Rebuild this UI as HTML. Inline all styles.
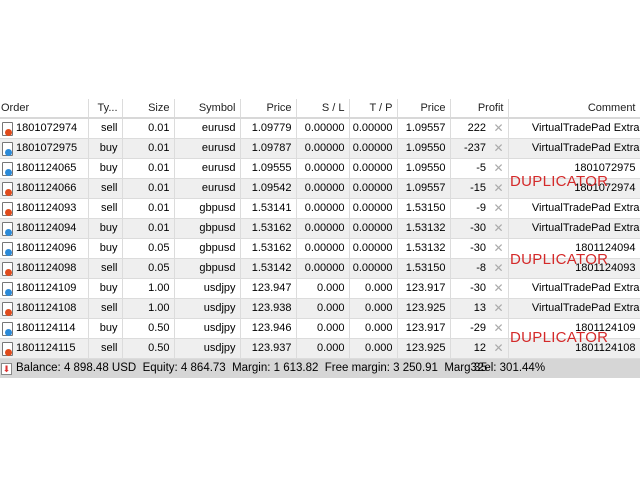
<!DOCTYPE html>
<html><head><meta charset="utf-8"><style>
body{margin:0;width:640px;height:480px;background:#fff;font-family:"Liberation Sans",sans-serif;font-size:11px;color:#000;position:relative;overflow:hidden}
table{position:absolute;left:0;top:99px;border-collapse:collapse;table-layout:fixed;width:640px}
td,th{height:19px;line-height:19px;padding:0 4px 0 0;border-right:1px solid #dcdcdc;border-bottom:1px solid #dcdcdc;text-align:right;white-space:nowrap;overflow:hidden;font-weight:normal}
th{border-bottom:2px solid #d8d8d8;height:18px;line-height:18px;color:#222}
tr.g td{background:#efefef}
td.o{text-align:left;padding-left:16px;position:relative}
th.o{text-align:left;padding-left:1px}
td.c{overflow:visible;padding-right:0}
.ic{position:absolute;left:2px;top:3px;width:9px;height:12px;border:1px solid #777;border-radius:1px;background:#fff}
.ic i{position:absolute;left:2px;top:6px;width:7px;height:7px;border-radius:50%}
.s i{background:#e04a1a}.b i{background:#2a8ad8}
.x{color:#aaa;font-size:12px}
.dup{position:absolute;left:510px;color:#d42a2a;font-size:15px;letter-spacing:0.3px}
.st{position:absolute;left:0;top:359px;width:640px;height:19px;background:#d6d6d6;font-size:11.5px;line-height:19px}
.st b{font-weight:normal;padding-left:16px}
.si{position:absolute;left:1px;top:4px;width:9px;height:10px;border:1px solid #888;background:#fff;color:#d33;font-size:9px;line-height:10px;text-align:center}
</style></head><body>
<table>
<colgroup><col style="width:88px"><col style="width:34px"><col style="width:52px"><col style="width:66px"><col style="width:56px"><col style="width:53px"><col style="width:48px"><col style="width:53px"><col style="width:40px"><col style="width:18px"><col style="width:132px"></colgroup>
<tr><th class="o">Order</th><th>Ty...</th><th>Size</th><th>Symbol</th><th>Price</th><th>S / L</th><th>T / P</th><th>Price</th><th colspan="2">Profit</th><th>Comment</th></tr>
<tr><td class="o"><span class="ic s"><i></i></span>1801072974</td><td>sell</td><td>0.01</td><td>eurusd</td><td>1.09779</td><td>0.00000</td><td>0.00000</td><td>1.09557</td><td style="border-right:none">222</td><td class="x">✕</td><td class="c">VirtualTradePad Extra</td></tr>
<tr class="g"><td class="o"><span class="ic b"><i></i></span>1801072975</td><td>buy</td><td>0.01</td><td>eurusd</td><td>1.09787</td><td>0.00000</td><td>0.00000</td><td>1.09550</td><td style="border-right:none">-237</td><td class="x">✕</td><td class="c">VirtualTradePad Extra</td></tr>
<tr><td class="o"><span class="ic b"><i></i></span>1801124065</td><td>buy</td><td>0.01</td><td>eurusd</td><td>1.09555</td><td>0.00000</td><td>0.00000</td><td>1.09550</td><td style="border-right:none">-5</td><td class="x">✕</td><td>1801072975</td></tr>
<tr class="g"><td class="o"><span class="ic s"><i></i></span>1801124066</td><td>sell</td><td>0.01</td><td>eurusd</td><td>1.09542</td><td>0.00000</td><td>0.00000</td><td>1.09557</td><td style="border-right:none">-15</td><td class="x">✕</td><td>1801072974</td></tr>
<tr><td class="o"><span class="ic s"><i></i></span>1801124093</td><td>sell</td><td>0.01</td><td>gbpusd</td><td>1.53141</td><td>0.00000</td><td>0.00000</td><td>1.53150</td><td style="border-right:none">-9</td><td class="x">✕</td><td class="c">VirtualTradePad Extra</td></tr>
<tr class="g"><td class="o"><span class="ic b"><i></i></span>1801124094</td><td>buy</td><td>0.01</td><td>gbpusd</td><td>1.53162</td><td>0.00000</td><td>0.00000</td><td>1.53132</td><td style="border-right:none">-30</td><td class="x">✕</td><td class="c">VirtualTradePad Extra</td></tr>
<tr><td class="o"><span class="ic b"><i></i></span>1801124096</td><td>buy</td><td>0.05</td><td>gbpusd</td><td>1.53162</td><td>0.00000</td><td>0.00000</td><td>1.53132</td><td style="border-right:none">-30</td><td class="x">✕</td><td>1801124094</td></tr>
<tr class="g"><td class="o"><span class="ic s"><i></i></span>1801124098</td><td>sell</td><td>0.05</td><td>gbpusd</td><td>1.53142</td><td>0.00000</td><td>0.00000</td><td>1.53150</td><td style="border-right:none">-8</td><td class="x">✕</td><td>1801124093</td></tr>
<tr><td class="o"><span class="ic b"><i></i></span>1801124109</td><td>buy</td><td>1.00</td><td>usdjpy</td><td>123.947</td><td>0.000</td><td>0.000</td><td>123.917</td><td style="border-right:none">-30</td><td class="x">✕</td><td class="c">VirtualTradePad Extra</td></tr>
<tr class="g"><td class="o"><span class="ic s"><i></i></span>1801124108</td><td>sell</td><td>1.00</td><td>usdjpy</td><td>123.938</td><td>0.000</td><td>0.000</td><td>123.925</td><td style="border-right:none">13</td><td class="x">✕</td><td class="c">VirtualTradePad Extra</td></tr>
<tr><td class="o"><span class="ic b"><i></i></span>1801124114</td><td>buy</td><td>0.50</td><td>usdjpy</td><td>123.946</td><td>0.000</td><td>0.000</td><td>123.917</td><td style="border-right:none">-29</td><td class="x">✕</td><td>1801124109</td></tr>
<tr class="g"><td class="o"><span class="ic s"><i></i></span>1801124115</td><td>sell</td><td>0.50</td><td>usdjpy</td><td>123.937</td><td>0.000</td><td>0.000</td><td>123.925</td><td style="border-right:none">12</td><td class="x">✕</td><td>1801124108</td></tr>
</table>
<div class="dup" style="top:173px">DUPLICATOR</div>
<div class="dup" style="top:251px">DUPLICATOR</div>
<div class="dup" style="top:329px">DUPLICATOR</div>
<div class="st"><span class="si">⬇</span><b>Balance: 4 898.48 USD&nbsp; Equity: 4 864.73&nbsp; Margin: 1 613.82&nbsp; Free margin: 3 250.91&nbsp; Marg<span style="letter-spacing:-3px">33.25</span>el: 301.44%</b></div>
</body></html>
